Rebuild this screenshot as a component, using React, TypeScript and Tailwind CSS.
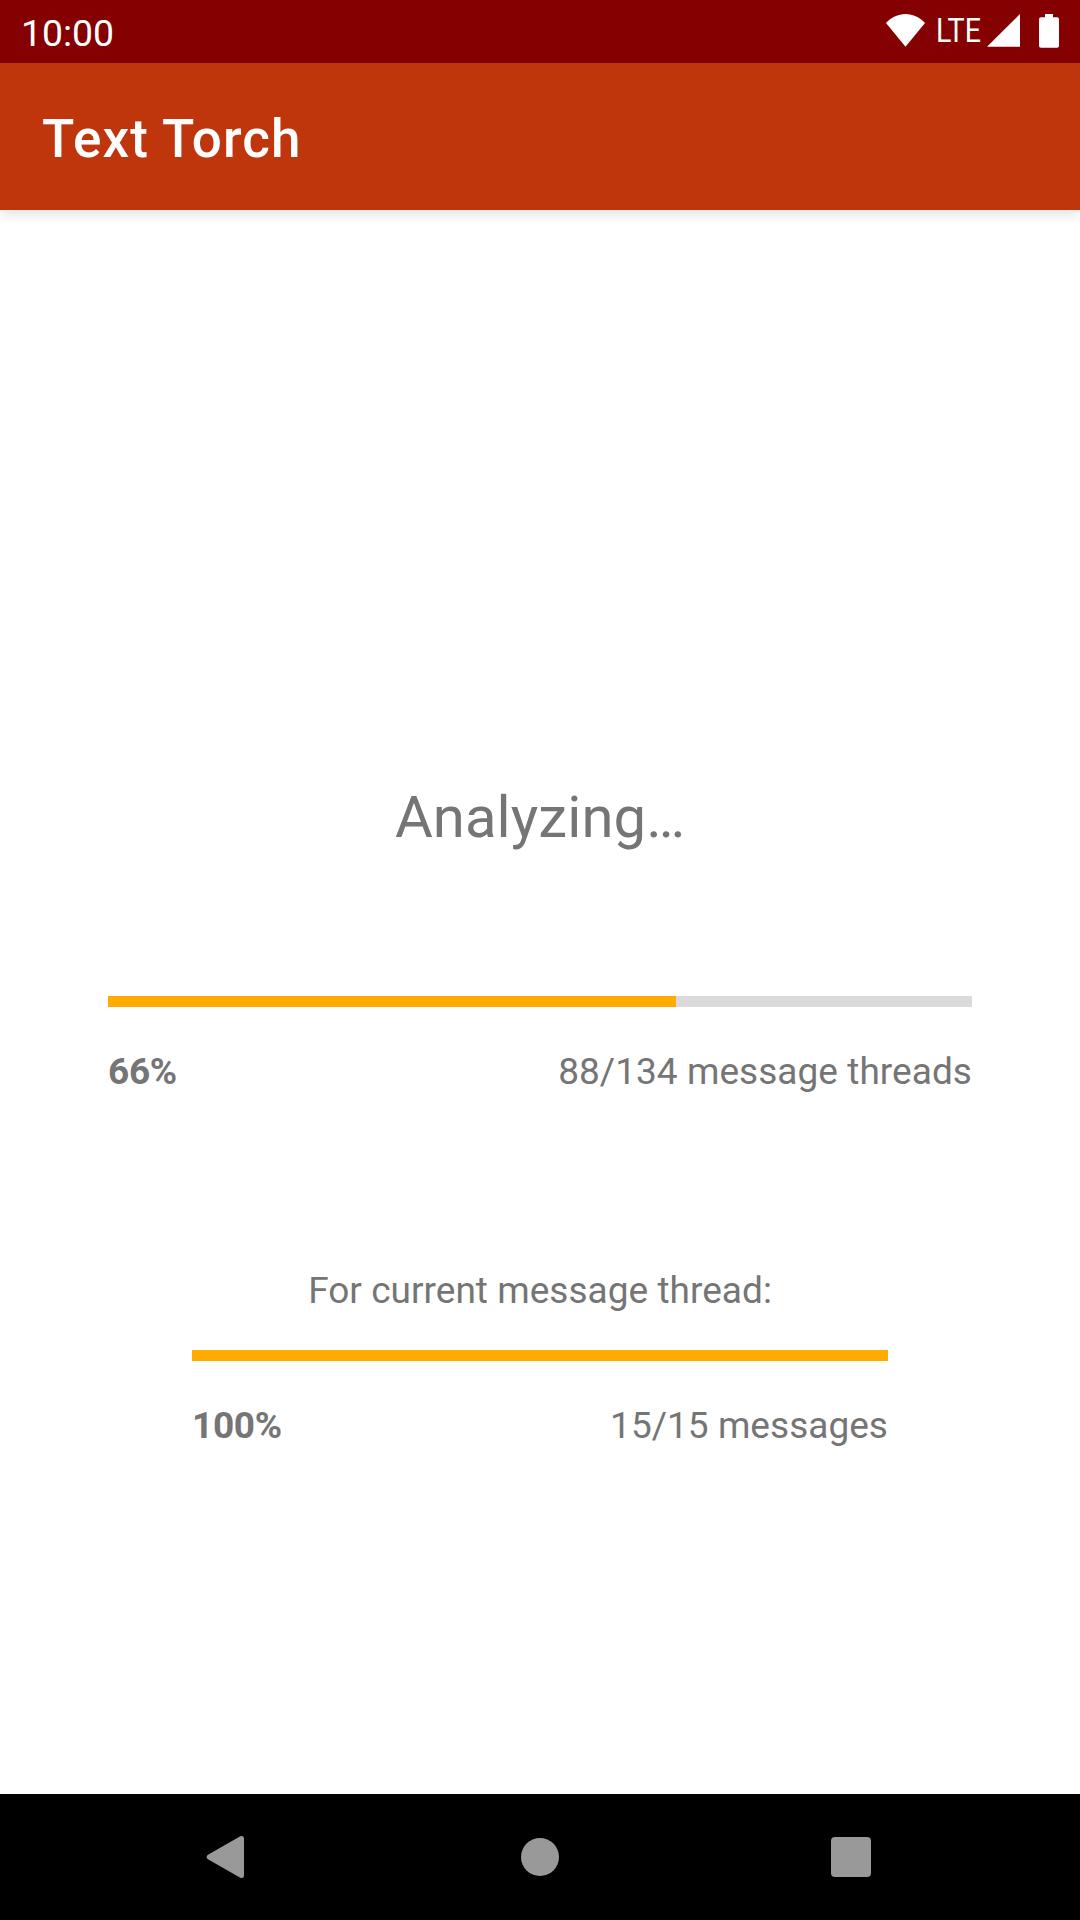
import React from "react";

function StatusBar() {
  return (
    <div className="flex h-[63px] items-start justify-between bg-[#850000] pl-[21px] pr-[21px] text-white">
      <span className="pt-[11px] text-[37.4px] leading-[44px]">10:00</span>
      <div className="flex items-start pt-[14px]">
        <svg width="39" height="33" viewBox="0 0 39 33" fill="currentColor">
          <path d="M19.5 32.7L0 9C5 3.5 12 0 19.5 0S34 3.5 39 9Z" />
        </svg>
        <div className="ml-[11px] mt-[-2px] w-[51px] whitespace-nowrap text-[32.5px] font-normal leading-[38px]">
          <span className="inline-block origin-left scale-x-[0.88]">LTE</span>
        </div>
        <svg width="33" height="33" viewBox="0 0 33 33" fill="currentColor">
          <path d="M33 0V32.8H0Z" />
        </svg>
        <svg className="ml-[19px]" width="20" height="34" viewBox="0 0 20 34" fill="currentColor">
          <path d="M6 0H14V3.3H18Q20 3.3 20 5.3V31.7Q20 33.7 18 33.7H2Q0 33.7 0 31.7V5.3Q0 3.3 2 3.3H6Z" />
        </svg>
      </div>
    </div>
  );
}

function Progress({ percent }: { percent: number }) {
  return (
    <div className="h-[11px] bg-[#dadada]">
      <div className="h-full bg-[#ffab00]" style={{ width: `${percent}%` }} />
    </div>
  );
}

export default function App() {
  return (
    <div className="flex h-[1920px] w-[1080px] flex-col bg-white font-[Roboto,sans-serif] text-[#757575]">
      <StatusBar />
      <header className="flex h-[147px] items-center bg-[#bf360c] pl-[42px] text-[53px] font-medium tracking-[1.1px] text-white shadow-[0_4px_12px_rgba(0,0,0,0.12)]">
        <h1 className="pt-[6px]">Text Torch</h1>
      </header>
      <main className="flex-1 text-[37px] leading-[50px]">
        <h2 className="pt-[572px] text-center text-[58px] leading-[70px] tracking-[0.1px]">Analyzing…</h2>
        <section className="mx-[108px] mt-[144px]">
          <Progress percent={65.74} />
          <div className="mt-[40px] flex justify-between"><b className="tracking-[-0.3px]">66%</b><span className="tracking-[0.05px]">88/134 message threads</span></div>
        </section>
        <section className="mx-[192px] mt-[169px]">
          <p className="text-center tracking-[0.03px]">For current message thread:</p>
          <div className="mt-[34px]"><Progress percent={100} /></div>
          <div className="mt-[40px] flex justify-between"><b className="tracking-[-0.3px]">100%</b><span className="tracking-[0.03px]">15/15 messages</span></div>
        </section>
      </main>
      <nav className="flex h-[126px] items-center bg-black text-[#999]">
        <svg className="ml-[206px]" width="39" height="44" viewBox="0 0 39 44" fill="currentColor"><path d="M35.5 3.5V40.5L3.2 22Z" stroke="currentColor" strokeWidth="5" strokeLinejoin="round" /></svg>
        <div className="ml-[276px] size-[38px] rounded-full bg-[#999]" />
        <div className="ml-[272px] size-[40px] rounded-[4px] bg-[#999]" />
      </nav>
    </div>
  );
}
